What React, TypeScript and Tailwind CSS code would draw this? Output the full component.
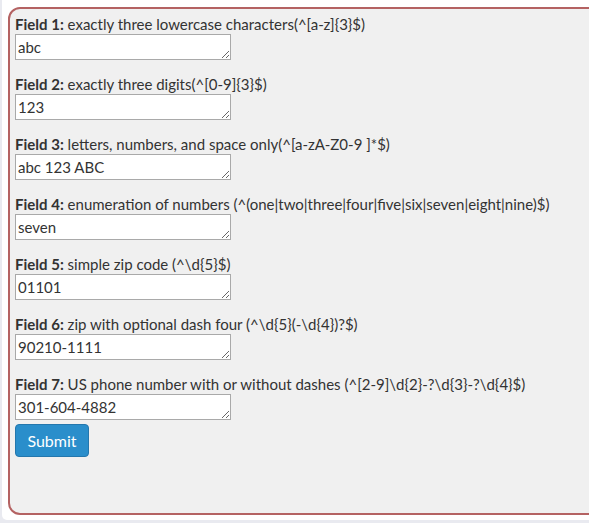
const fields = [
  { n: 1, label: "exactly three lowercase characters(^[a-z]{3}$)", value: "abc" },
  { n: 2, label: "exactly three digits(^[0-9]{3}$)", value: "123" },
  { n: 3, label: "letters, numbers, and space only(^[a-zA-Z0-9 ]*$)", value: "abc 123 ABC" },
  { n: 4, label: "enumeration of numbers (^(one|two|three|four|five|six|seven|eight|nine)$)", value: "seven" },
  { n: 5, label: "simple zip code (^\\d{5}$)", value: "01101" },
  { n: 6, label: "zip with optional dash four (^\\d{5}(-\\d{4})?$)", value: "90210-1111" },
  { n: 7, label: "US phone number with or without dashes (^[2-9]\\d{2}-?\\d{3}-?\\d{4}$)", value: "301-604-4882" },
];

export default function App() {
  return (
    <div className="w-[589px] h-[523px] overflow-hidden bg-[#e9eaf0] pl-[2px] font-['Lato',sans-serif] text-[15px] text-[#333]">
      <div className="h-[520px] bg-white rounded-bl-[5px] pl-[6px] pt-[7px]">
        <div className="h-[508px] w-[620px] border-2 border-[#b46262] rounded-[12px] bg-[#f0f0f0] pl-[5px] pt-[5px]">
          {fields.map((f, i) => (
            <div key={f.n} className={i < fields.length - 1 ? "mb-[14px]" : "mb-[4px]"}>
              <div className="leading-[20px] whitespace-nowrap">
                <b>Field {f.n}:</b> {f.label}
              </div>
              <textarea
                defaultValue={f.value}
                className="block w-[216px] h-[26px] bg-white border border-[#a9a9a9] px-[2px] py-0 leading-[24px] text-[15px] text-[#333] resize-y overflow-hidden"
              />
            </div>
          ))}
          <button className="block w-[74px] h-[33px] bg-[#2a8ecb] border border-[#2477ad] rounded-[4px] text-white text-[16px] font-normal">
            Submit
          </button>
        </div>
      </div>
    </div>
  );
}
